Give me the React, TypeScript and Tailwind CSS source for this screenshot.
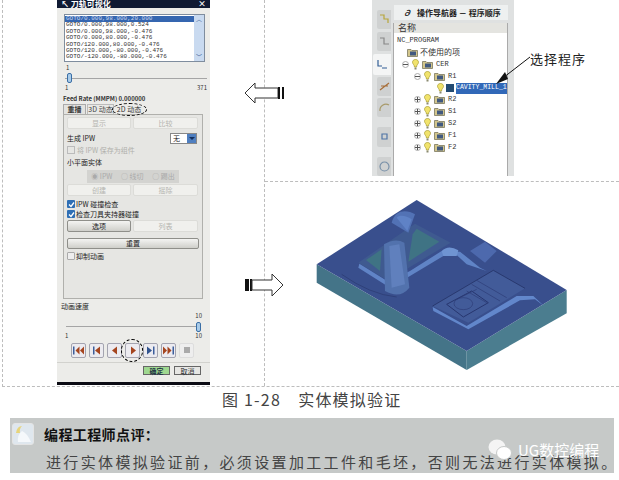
const cjk = { fontFamily: '"Noto Sans CJK SC", sans-serif' };

const gotoRows = [
  'GOTO/0.000,98.000,20.000',
  'GOTO/0.000,98.000,0.524',
  'GOTO/0.000,98.000,-0.476',
  'GOTO/0.000,80.000,-0.476',
  'GOTO/120.000,80.000,-0.476',
  'GOTO/120.000,-80.000,-0.476',
  'GOTO/-120.000,-80.000,-0.476',
  'GOTO/-120.000,80.000,-0.476',
];

const treeRows = [
  { label: 'R2' },
  { label: 'S1' },
  { label: 'S2' },
  { label: 'F1' },
  { label: 'F2' },
];

function Btn({ label, active, className = '' }: { label: string; active?: boolean; className?: string }) {
  return (
    <div
      className={`flex items-center justify-center rounded-[2px] border text-[7px] leading-none ${
        active
          ? 'border-[#8f8f8a] bg-gradient-to-b from-[#f4f4f2] to-[#cfcfca] text-[#222]'
          : 'border-[#dcdcd8] bg-[#f0f0ed] text-[#b5b5b0]'
      } ${className}`}
    >
      {label}
    </div>
  );
}

function Check({ label, checked }: { label: string; checked?: boolean }) {
  return (
    <div className="flex items-center gap-[1px] h-[10px] text-[7px] leading-none text-[#222]">
      <div
        className={`w-[8px] h-[8px] rounded-[1px] flex items-center justify-center ${
          checked ? 'bg-[#2f6fb5]' : 'border border-[#aaa] bg-[#eee]'
        }`}
      >
        {checked && (
          <svg width="7" height="7" viewBox="0 0 7 7">
            <path d="M1 3.5 L3 5.5 L6 1.5" stroke="#fff" strokeWidth="1.3" fill="none" />
          </svg>
        )}
      </div>
      <span>{label}</span>
    </div>
  );
}

function Thumb() {
  return <div className="w-[5px] h-[10px] rounded-[2px] border border-[#3a6ea5] bg-[#a9cbe8]" />;
}

function PlayBtn({ d, color = '#a5451f', bars }: { d: string; color?: string; bars?: string }) {
  return (
    <div className="w-[15px] h-[15px] rounded-[2px] border border-[#a4a4b0] bg-[#ecebf0] flex items-center justify-center">
      <svg width="13" height="11" viewBox="0 0 13 11">
        {bars && <path d={bars} fill="#3d5f9c" />}
        <path d={d} fill={color} />
      </svg>
    </div>
  );
}

function Bulb() {
  return (
    <svg width="7" height="11" viewBox="0 0 7 11" className="shrink-0">
      <path d="M3.5 .5 C1.3 .5 .5 2 .5 3.3 C.5 5 2.3 5.6 2.5 8 H4.5 C4.7 5.6 6.5 5 6.5 3.3 C6.5 2 5.7 .5 3.5 .5Z" fill="#f1e36c" stroke="#a59a2c" strokeWidth=".7" />
      <rect x="2.5" y="8.5" width="2" height="2" fill="#8a8a70" />
    </svg>
  );
}

function Folder() {
  return (
    <svg width="11" height="9" viewBox="0 0 11 9" className="shrink-0">
      <path d="M.5 1.5 H4 L5 2.5 H10.5 V8.5 H.5Z" fill="#d3c68c" stroke="#6d6a50" strokeWidth=".7" />
      <rect x="3" y="3.5" width="6" height="4" fill="#41597f" />
    </svg>
  );
}

function Expander({ minus }: { minus?: boolean }) {
  return (
    <div className="w-[7px] h-[7px] shrink-0 rounded-full border border-[#aaa] bg-white flex items-center justify-center relative">
      <div className="w-[5px] h-px bg-[#555]" />
      {!minus && <div className="absolute w-px h-[5px] bg-[#555]" />}
    </div>
  );
}

function ToolIcon({ active, d, color, className = '' }: { active?: boolean; d: string; color: string; className?: string }) {
  return (
    <div
      className={`h-[22px] flex items-center justify-center rounded-l-[2px] ${
        active ? 'w-[18px] bg-[#f4f5f5]' : 'w-[14px] bg-[#cfd1d1]'
      } ${className}`}
    >
      <svg width="13" height="13" viewBox="0 0 13 13">
        <path d={d} fill="none" stroke={color} strokeWidth="1.2" />
      </svg>
    </div>
  );
}

function Dialog() {
  return (
    <div className="w-[153px] h-[385px] bg-[#ecece9] flex flex-col" style={cjk}>
      <div className="h-[8px] bg-[#101a33] flex items-end justify-between px-[4px] text-white text-[8px] leading-[8px] overflow-hidden shrink-0 font-bold">
        <span>↖ 刀轨可视化</span>
        <span>×</span>
      </div>

      <div className="mt-[6px] ml-[7px] w-[141px] h-[48px] border border-[#7f8d9e] bg-white flex overflow-hidden">
        <div className="flex-1 pt-[1px] overflow-hidden">
          {gotoRows.map((row, i) => (
            <div
              key={row}
              className={`h-[6.4px] pl-[1px] text-[6px] leading-[6.4px] whitespace-nowrap ${
                i === 0 ? 'bg-[#3566b0] text-[#c9d6ee]' : 'text-[#333]'
              }`}
              style={{ fontFamily: '"Liberation Mono", monospace' }}
            >
              {row}
            </div>
          ))}
        </div>
        <div className="w-[10px] bg-[#c9daf0] flex flex-col justify-between items-center text-[6px] leading-[8px] text-[#34568f]">
          <span>︿</span>
          <span>﹀</span>
        </div>
      </div>

      <div className="ml-[9px] mt-[2px] text-[6px] leading-[8px] text-[#333]">1</div>
      <div className="ml-[8px] mr-[3px] h-[12px] relative flex items-center">
        <div className="h-px w-full bg-[#a5a5a5]" />
        <div className="absolute left-[2px]">
          <Thumb />
        </div>
      </div>
      <div className="mx-[8px] mr-[3px] flex justify-between text-[6px] leading-[8px] text-[#333]">
        <span>1</span>
        <span>371</span>
      </div>
      <div className="ml-[6px] mt-[2px] text-[6px] leading-[9px] text-[#333] whitespace-nowrap font-bold">
        Feed Rate (MMPM) 0.000000
      </div>

      <div className="ml-[6px] mt-[1px] h-[10px] flex text-[7px] leading-none">
        <div className="w-[23px] flex items-center justify-center border border-b-0 border-[#aaa] bg-[#e3e3e0] font-bold text-[#333]">重播</div>
        <div className="w-[27px] ml-[1px] flex items-center justify-center border border-b-0 border-[#bbb] bg-[#e9e9e6] text-[#444]">3D 动态</div>
        <div className="w-[30px] flex items-center justify-center relative text-[#333]">
          2D 动态
          <div className="absolute -left-[2px] -top-[1px] w-[35px] h-[13px] rounded-[50%] border border-dashed border-black" />
        </div>
      </div>

      <div className="ml-[6px] w-[140px] h-[185px] border border-[#b0b0ac] bg-[#e6e6e3] px-[3px] pt-[2px] flex flex-col">
        <div className="flex gap-[2px]">
          <Btn label="显示" className="w-[64px] h-[12px]" />
          <Btn label="比较" className="w-[65px] h-[12px]" />
        </div>
        <div className="mt-[2px] h-[14px] flex items-center justify-between text-[7px] text-[#222] leading-none">
          <span>生成 IPW</span>
          <div className="w-[27px] h-[11px] mr-[2px] border border-[#888] bg-white flex items-center justify-between pl-[2px]">
            <span>无</span>
            <div className="w-[9px] h-[9px] bg-[#4f7fc0] flex items-center justify-center">
              <div className="w-0 h-0 border-x-[3px] border-x-transparent border-t-[3px] border-t-[#14305f]" />
            </div>
          </div>
        </div>
        <div className="h-[10px] flex items-center gap-[2px] text-[7px] leading-none text-[#b0b0ab]">
          <div className="w-[8px] h-[8px] border border-[#bbb]" />
          <span>将 IPW 保存为组件</span>
        </div>
        <div className="mt-[2px] h-[11px] flex items-center text-[7px] leading-none text-[#222]">小平面实体</div>
        <div className="mt-[2px] ml-[20px] w-[92px] h-[13px] bg-[#d3d3d0] flex items-center justify-around text-[7px] leading-none text-[#aaa]">
          <span>◉ IPW</span>
          <span>○ 线切</span>
          <span>○ 踢出</span>
        </div>
        <div className="mt-[1px] flex gap-[2px]">
          <Btn label="创建" className="w-[64px] h-[12px]" />
          <Btn label="摇除" className="w-[65px] h-[12px]" />
        </div>
        <div className="mt-[3px]">
          <Check checked label="IPW 碰撞检查" />
          <Check checked label="检查刀具夹持器碰撞" />
        </div>
        <div className="mt-[1px] flex gap-[2px]">
          <Btn active label="选项" className="w-[64px] h-[12px]" />
          <Btn label="列表" className="w-[65px] h-[12px]" />
        </div>
        <Btn active label="重置" className="mt-[6px] w-[132px] h-[11px]" />
        <div className="mt-[2px]">
          <Check label="抑制动画" />
        </div>
      </div>

      <div className="ml-[4px] mt-[2px] text-[7px] leading-[10px] text-[#222]">动画速度</div>
      <div className="text-right pr-[8px] text-[6px] leading-[8px] mt-[1px] text-[#333]">10</div>
      <div className="ml-[9px] mr-[9px] mt-[1px] h-[11px] relative flex items-center">
        <div className="h-px w-full bg-[#a5a5a5]" />
        <div className="absolute right-0">
          <Thumb />
        </div>
      </div>
      <div className="mx-[8px] flex justify-between text-[6px] leading-[8px] text-[#333]">
        <span>1</span>
        <span>10</span>
      </div>

      <div className="ml-[14px] mt-[2px] flex gap-[3px] h-[16px] items-center">
        <PlayBtn d="M12 1.5 L8 5.5 L12 9.5Z M7.5 1.5 L3.5 5.5 L7.5 9.5Z" bars="M1 1.5 H2.5 V9.5 H1Z" />
        <PlayBtn d="M10 1.5 L5 5.5 L10 9.5Z" bars="M3 1.5 H4.5 V9.5 H3Z" />
        <PlayBtn d="M9 1.5 L4 5.5 L9 9.5Z" />
        <div className="relative">
          <PlayBtn d="M5 1.5 L10 5.5 L5 9.5Z" />
          <div className="absolute -left-[4px] -top-[4px] w-[22px] h-[23px] rounded-full border border-dashed border-black" />
        </div>
        <PlayBtn d="M3 1.5 L8 5.5 L3 9.5Z" color="#33558f" bars="M9 1.5 H10.5 V9.5 H9Z" />
        <PlayBtn d="M1 1.5 L5 5.5 L1 9.5Z M5.5 1.5 L9.5 5.5 L5.5 9.5Z" bars="M10.5 1.5 H12 V9.5 H10.5Z" />
        <div className="w-[15px] h-[15px] rounded-[2px] border border-[#ddd] bg-[#eee] flex items-center justify-center">
          <div className="w-[6px] h-[6px] bg-[#aaa]" />
        </div>
      </div>

      <div className="mt-[4px] h-px bg-[#d2d2ce]" />
      <div className="mt-[3px] flex justify-end gap-[4px] pr-[9px]">
        <div className="w-[27px] h-[9px] border border-[#666] bg-[#9fd890] text-[7px] leading-[8px] text-center font-bold text-[#234]">确定</div>
        <div className="w-[27px] h-[9px] border border-[#666] bg-[#e6e6e3] text-[7px] leading-[8px] text-center text-[#333]">取消</div>
      </div>
      <div className="mt-auto h-[3px] bg-[#0c0c14]" />
    </div>
  );
}

function Navigator() {
  return (
    <div className="ml-[107px] w-[142px] h-[176px] flex bg-[#dfe1e1]" style={cjk}>
      <div className="w-[19px] pt-[9px] flex flex-col items-end shrink-0">
        <ToolIcon d="M2 2 H6 V6 H10 V10" color="#b7a63a" className="mt-[1px]" />
        <ToolIcon d="M2 3 H6 V9 H11" color="#888" className="mt-[3px]" />
        <ToolIcon active d="M2 2 V8 H6 M6 10 H11" color="#335f96" className="mt-[3px] h-[25px]" />
        <ToolIcon d="M2 10 L11 3 M3 6 H10" color="#a86f3a" className="mt-[2px]" />
        <ToolIcon d="M2 10 A6 6 0 0 1 11 4" color="#a89a6a" className="mt-[2px]" />
        <ToolIcon d="M4 4 H9 V9 H4Z" color="#4f74a5" className="mt-[10px] h-[24px]" />
        <ToolIcon d="M2 6.5 A4.5 4.5 0 1 0 11 6.5 A4.5 4.5 0 1 0 2 6.5" color="#7890a8" className="mt-[10px]" />
      </div>
      <div className="flex-1 pt-[5px] pr-[6px] flex flex-col min-w-0">
        <div className="ml-[3px] h-[15px] bg-[#eef0f0] flex items-center gap-[6px] pl-[9px] text-[8px] leading-none font-bold text-[#222] whitespace-nowrap">
          <span className="italic">∂</span>
          <span>操作导航器 － 程序顺序</span>
        </div>
        <div className="ml-[2px] mt-[3px] flex-1 bg-white border-x border-[#aaa]">
          <div className="h-[10px] bg-[#e4e4e0] text-[9px] leading-[10px] pl-[4px] text-[#333]">名称</div>
          <div className="pl-[3px] text-[7px] leading-none text-[#333]" style={{ fontFamily: '"Liberation Mono", "Noto Sans CJK SC", monospace' }}>
            <div className="h-[12px] mt-[1px] flex items-center">NC_PROGRAM</div>
            <div className="h-[12px] flex items-center gap-[2px] pl-[10px] text-[8px]" style={cjk}>
              <Folder />
              不使用的项
            </div>
            <div className="h-[12px] flex items-center gap-[3px] pl-[5px]">
              <Expander minus />
              <Bulb />
              <Folder />
              CER
            </div>
            <div className="h-[12px] flex items-center gap-[3px] pl-[17px]">
              <Expander minus />
              <Bulb />
              <Folder />
              R1
            </div>
            <div className="h-[12px] flex items-center gap-[2px] pl-[40px]">
              <Bulb />
              <div className="w-[8px] h-[8px] bg-[#234b72] shrink-0" />
              <span className="bg-[#3168b8] text-white h-[11px] flex-1 flex items-center whitespace-nowrap overflow-hidden text-[6.5px]">CAVITY_MILL_1</span>
            </div>
            {treeRows.map((row) => (
              <div key={row.label} className="h-[11.8px] flex items-center gap-[3px] pl-[17px]">
                <Expander />
                <Bulb />
                <Folder />
                {row.label}
              </div>
            ))}
          </div>
        </div>
      </div>
    </div>
  );
}

function Part() {
  return (
    <svg width="319" height="190" viewBox="0 0 957 570" className="ml-[35px] mt-[9px]">
      <path d="M50 220 L500 480 L500 537 L50 275Z" fill="#447488" />
      <path d="M500 480 L800 297 L800 367 L500 537Z" fill="#4b7d8f" />
      <path d="M50 220 L350 27 L800 297 L500 480Z" fill="#394f8d" />
      <path d="M345 98 L452 155 L335 225 L265 270 L175 215Z" fill="#3f5a90" />
      <path d="M350 113 L418 152 L325 212 L338 130Z" fill="#3f7384" />
      <path d="M245 175 L198 207 L240 240Z" fill="#3f7384" />
      <path d="M275 95 C285 55 320 55 345 70 L325 125 Z" fill="#5272b5" />
      <path d="M290 80 C300 70 320 75 335 85 L322 120 Z" fill="#5f82c6" />
      <path d="M178 218 L265 272 L330 240 L425 180 L480 182 L540 230 L560 240 L500 220 L470 192 L430 195 L330 255 L270 290 L175 230Z" fill="#6084c6" />
      <path d="M425 180 Q445 160 475 178 L470 195 L430 195Z" fill="#6f94d2" />
      <path d="M510 180 L555 152 L590 180 L555 215Z" fill="#4d69ad" />
      <path d="M252 160 Q285 140 313 155 L328 290 Q300 325 255 300Z" fill="#5272ad" />
      <path d="M268 165 L298 160 L315 280 L275 290Z" fill="#6080bd" />
      <path d="M125 250 Q210 310 290 318" fill="none" stroke="#2a3a70" strokeWidth="2" />
      <path d="M398 345 L580 238 L675 292 L505 395Z" fill="#425b99" />
      <path d="M398 348 L500 405 L650 315 L700 315 L732 345 L705 325 L660 328 L505 415 L400 360Z" fill="#6287cb" />
      <path d="M398 345 L580 238 L675 292" fill="none" stroke="#1e2a5c" strokeWidth="2" />
      <path d="M440 340 L515 300 L565 335 L490 378Z" fill="none" stroke="#27366f" strokeWidth="3" />
      <path d="M470 325 L530 295 M500 300 L560 335 M530 268 L620 320 M515 280 L600 330" fill="none" stroke="#2c3b76" strokeWidth="2" />
      <ellipse cx="490" cy="338" rx="28" ry="18" fill="none" stroke="#2c3b76" strokeWidth="2" />
    </svg>
  );
}

function HollowArrow({ dir }: { dir: 'left' | 'right' }) {
  return dir === 'left' ? (
    <svg width="40" height="22" viewBox="0 0 40 22" className="absolute left-[244px] top-[82px]">
      <path d="M1 11 L11 1 V6 H34 V16 H11 V21Z" fill="#fff" stroke="#333" strokeWidth="1" />
      <rect x="34" y="5" width="2" height="12" fill="#111" />
      <rect x="38" y="5" width="2" height="12" fill="#111" />
    </svg>
  ) : (
    <svg width="39" height="24" viewBox="0 0 39 24" className="absolute left-[245px] top-[273px]">
      <rect x="0" y="6" width="4" height="12" fill="#111" />
      <rect x="5" y="6" width="2" height="12" fill="#111" />
      <path d="M7 7 H27 V1 L38 12 L27 23 V17 H7Z" fill="#fff" stroke="#333" strokeWidth="1" />
    </svg>
  );
}

export default function App() {
  return (
    <div className="w-[619px] h-[480px] bg-white relative overflow-hidden">
      <div className="flex h-[387px] ml-[2px] border-l border-b border-dashed border-[#bdbdbd]">
        <div className="w-[262px] border-r border-dashed border-[#bdbdbd] pl-[54px] shrink-0">
          <Dialog />
        </div>
        <div className="flex-1 flex flex-col">
          <div className="h-[182px] border-b border-dashed border-[#bdbdbd] relative">
            <Navigator />
            <div className="absolute left-[265px] top-[50px] text-[13px] leading-[18px] tracking-[1px] text-[#222]" style={cjk}>
              选择程序
            </div>
            <svg width="40" height="32" viewBox="0 0 40 32" className="absolute left-[231px] top-[54px]">
              <path d="M34 3 L3 27" stroke="#111" strokeWidth="1" />
              <path d="M0 30 L9 18 L12 25Z" fill="#111" />
            </svg>
          </div>
          <div className="flex-1">
            <Part />
          </div>
        </div>
      </div>
      <HollowArrow dir="left" />
      <HollowArrow dir="right" />

      <div className="mt-[1px] ml-[222px] h-[22px] text-[16px] leading-[22px] tracking-[1.2px] text-[#444] whitespace-pre" style={cjk}>
        图 1-28　实体模拟验证
      </div>

      <div className="mt-[8px] ml-[10px] w-[604px] h-[55px] bg-[#c6c9c8] relative" style={cjk}>
        <div className="flex items-center gap-[10px] pl-[2px] pt-[5px]">
          <div className="w-[22px] h-[22px] rounded-[3px] border border-[#e4e4e4] bg-[#dfe7ee] overflow-hidden shrink-0">
            <svg width="20" height="20" viewBox="0 0 20 20">
              <path d="M3 9 Q4 2 9 2 Q6 5 7 9Z" fill="#e7d47a" />
              <path d="M5 18 Q4 11 9 7 Q14 9 18 18Z" fill="#f5f8fb" />
            </svg>
          </div>
          <div className="text-[14px] leading-[20px] font-bold text-[#111] tracking-[0.4px]">编程工程师点评：</div>
        </div>
        <div className="pl-[36px] mt-[6px] text-[15px] leading-[22px] tracking-[2.35px] text-[#444] whitespace-nowrap">
          进行实体模拟验证前，必须设置加工工件和毛坯，否则无法进行实体模拟。
        </div>
        <div className="absolute left-[478px] top-[21px] flex items-center gap-[6px] text-white text-[15px] leading-none">
          <svg width="24" height="21" viewBox="0 0 24 21">
            <ellipse cx="9" cy="8" rx="8.5" ry="7.5" fill="#f4f4f4" />
            <ellipse cx="16" cy="14" rx="7.5" ry="6.5" fill="#ffffff" stroke="#c6c9c8" strokeWidth="1" />
          </svg>
          <span>UG数控编程</span>
        </div>
      </div>
    </div>
  );
}
